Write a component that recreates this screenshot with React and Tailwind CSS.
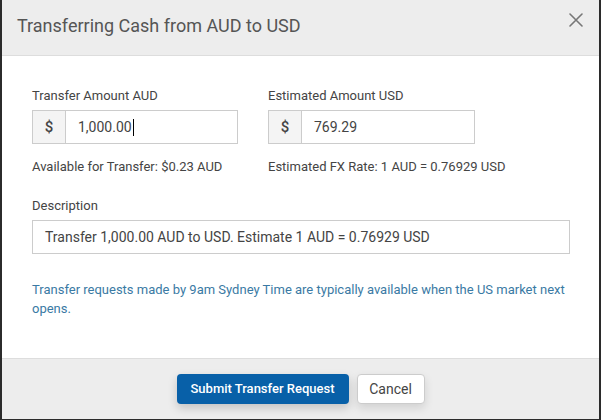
import React from "react";

// ── Small pieces ────────────────────────────────────────────────────────────
const CloseIcon = () => (
  <svg width="14" height="14" viewBox="0 0 14 14" fill="none">
    <path d="M1 1L13 13M13 1L1 13" stroke="#777" strokeWidth="1.6" strokeLinecap="round" />
  </svg>
);

const MoneyInput = ({ value, width, caret }) => (
  <div className={`flex h-[34px] border border-[#cccccc] ${width}`}>
    <div className="flex w-[33px] shrink-0 items-center justify-center border-r border-[#cccccc] bg-[#f4f4f4] text-[15px] font-medium text-[#444]">
      $
    </div>
    <div className="flex flex-1 items-center pl-[12px] text-[14px] text-[#444]">
      {value}
      {caret && <span className="ml-[1px] h-[17px] w-[1px] bg-black" />}
    </div>
  </div>
);

// ── Component ───────────────────────────────────────────────────────────────
export default function App() {
  return (
    <div
      className="h-[420px] w-[601px] bg-[#2b2b2b] pb-[1px] pl-[2px] pr-[2px]"
      style={{ fontFamily: "Roboto, 'Liberation Sans', sans-serif" }}
    >
      <div className="flex h-full flex-col bg-white">
        {/* Header */}
        <div className="flex h-[56px] shrink-0 items-center justify-between border-b border-[#dddddd] bg-[#ededed] pl-[15px] pr-[16px]">
          <h1 className="pb-[4px] text-[18px] text-[#555]">Transferring Cash from AUD to USD</h1>
          <button className="mb-[16px]" aria-label="Close">
            <CloseIcon />
          </button>
        </div>

        {/* Body */}
        <div className="flex-1 px-[30px] pt-[32px] text-[13px] leading-[16px] text-[#444]">
          <div className="flex">
            <div className="w-[236px]">
              <div className="mb-[6px]">Transfer Amount AUD</div>
              <MoneyInput value="1,000.00" width="w-[206px]" caret />
              <div className="mt-[15px]">Available for Transfer: $0.23 AUD</div>
            </div>
            <div>
              <div className="mb-[6px]">Estimated Amount USD</div>
              <MoneyInput value="769.29" width="w-[207px]" />
              <div className="mt-[15px]">Estimated FX Rate: 1 AUD = 0.76929 USD</div>
            </div>
          </div>

          <div className="mt-[23px] mb-[6px]">Description</div>
          <div className="flex h-[34px] w-[538px] items-center border border-[#cccccc] pl-[12px] text-[14px] text-[#444]">
            Transfer 1,000.00 AUD to USD. Estimate 1 AUD = 0.76929 USD
          </div>

          <p className="mt-[26px] w-[540px] leading-[19px] text-[#3a7aa4]">
            Transfer requests made by 9am Sydney Time are typically available when the US market next opens.
          </p>
        </div>

        {/* Footer */}
        <div className="flex h-[61px] shrink-0 items-start justify-center gap-[8px] border-t border-[#dddddd] bg-[#ededed] pt-[15px]">
          <button className="h-[30px] w-[172px] rounded-[4px] bg-[#0860a8] text-[13px] font-medium text-white shadow-[0_4px_10px_rgba(0,0,0,0.18)]">
            Submit Transfer Request
          </button>
          <button className="h-[30px] w-[68px] rounded-[4px] border border-[#cccccc] bg-white text-[14px] text-[#444] shadow-[0_4px_10px_rgba(0,0,0,0.12)]">
            Cancel
          </button>
        </div>
      </div>
    </div>
  );
}
